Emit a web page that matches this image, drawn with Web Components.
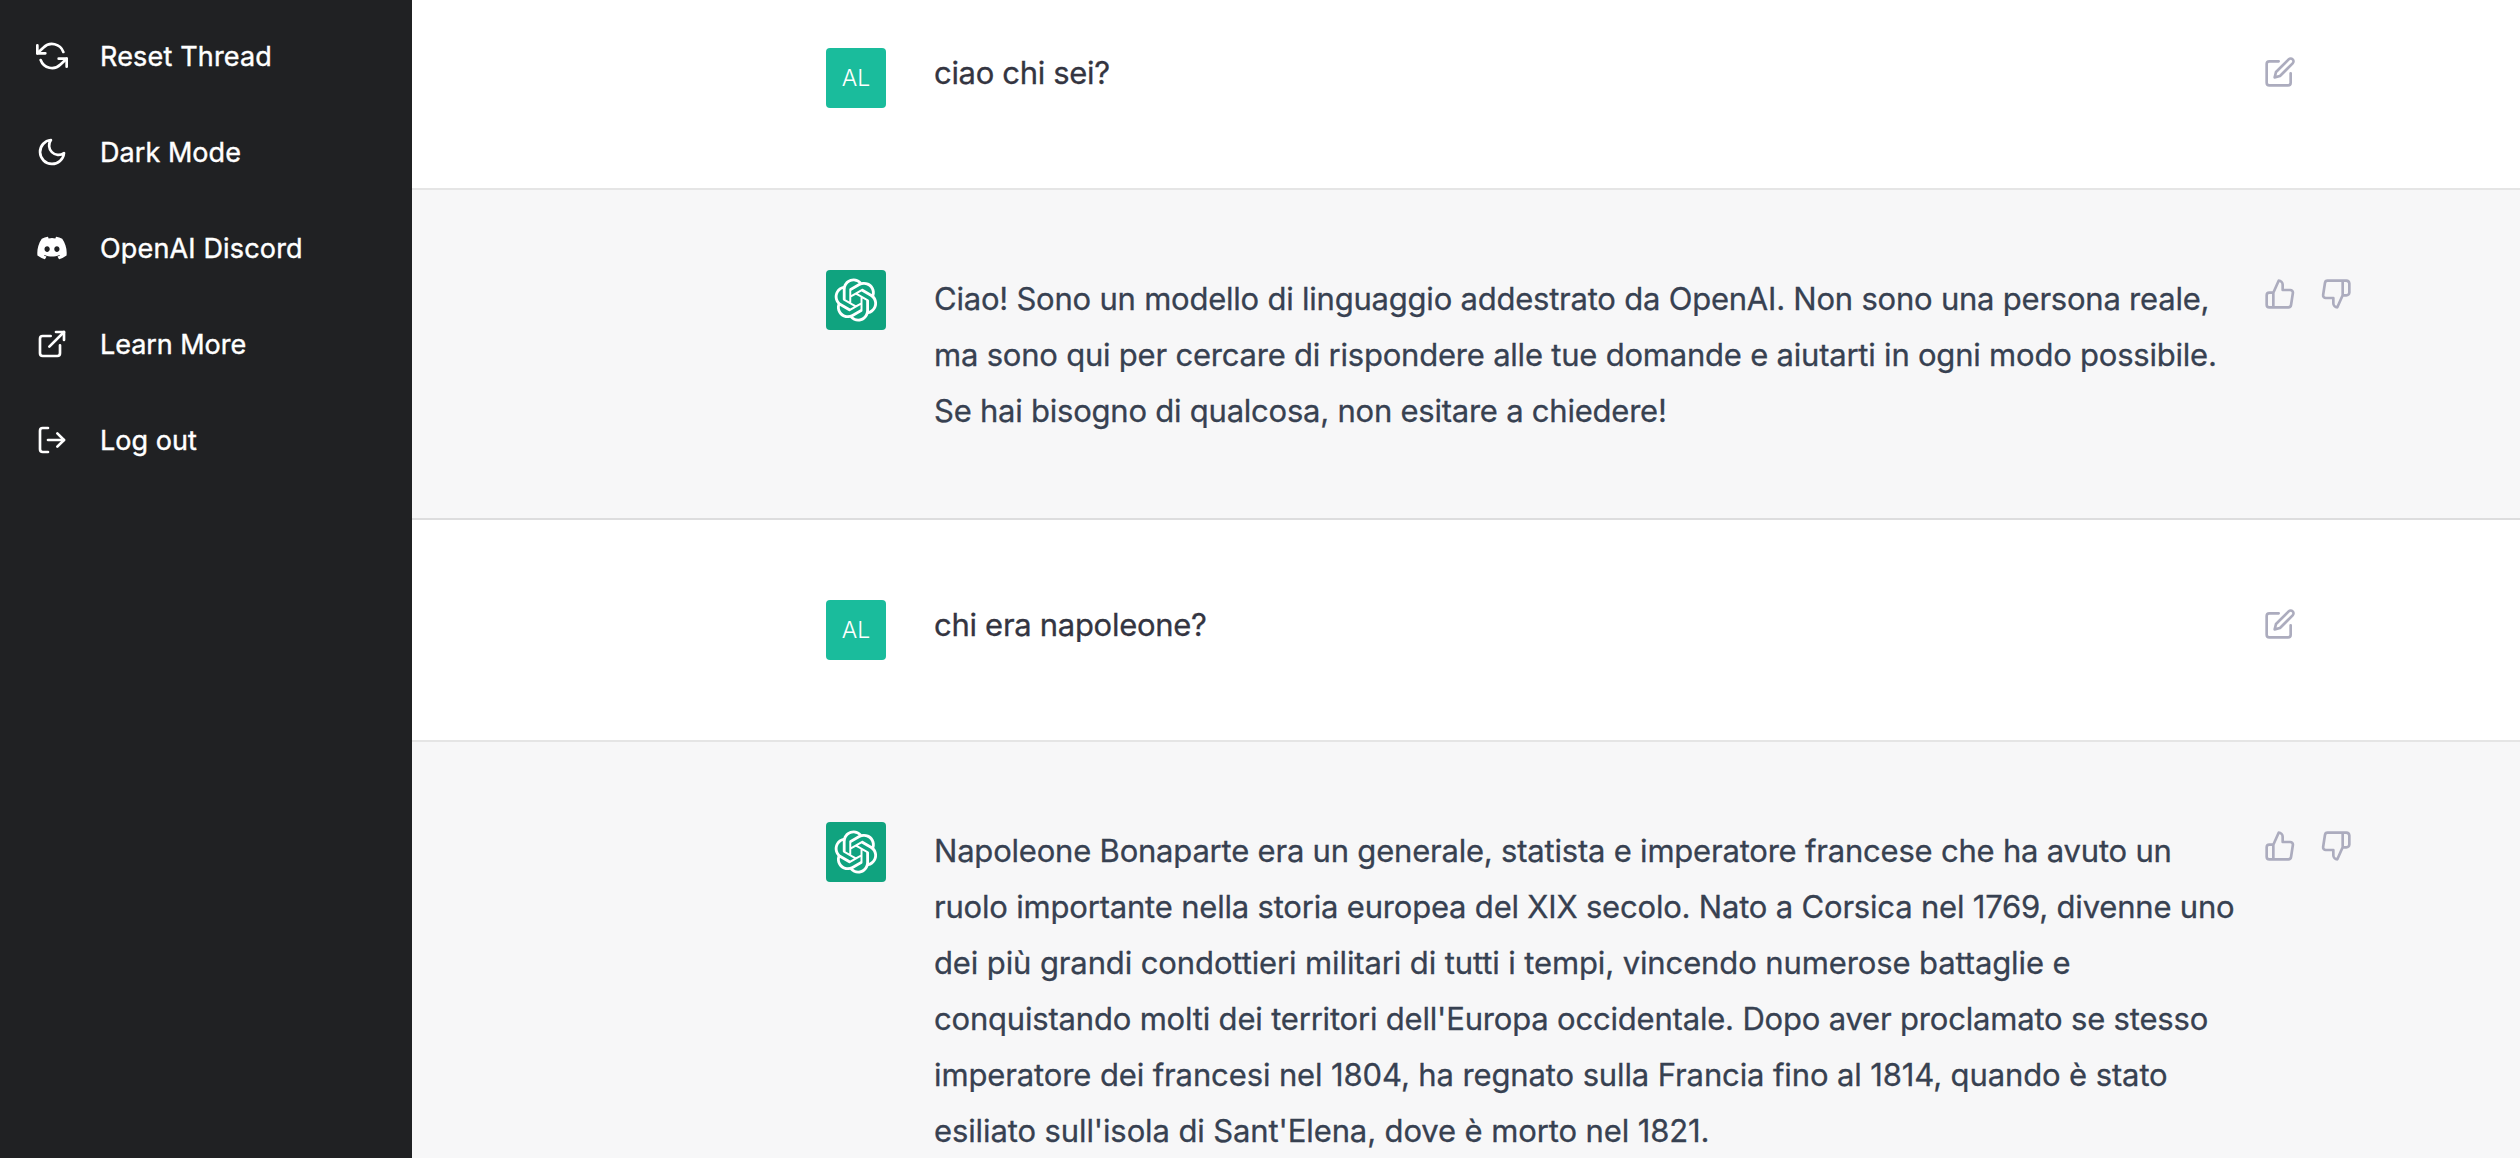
<!DOCTYPE html>
<html lang="it">
<head>
<meta charset="utf-8">
<title>Chat</title>
<style>
    body {
        margin: 0;
        height: 100vh;
        overflow: hidden;
        font-family: Inter, "Liberation Sans", sans-serif;
    }
</style>
</head>
<body>
<chat-app>
    <side-nav slot="nav">
        <side-link icon="refresh" track="0.17">Reset Thread</side-link>
        <side-link icon="moon" track="0.05">Dark Mode</side-link>
        <side-link icon="discord" track="0.16">OpenAI Discord</side-link>
        <side-link icon="external" track="-0.05">Learn More</side-link>
        <side-link icon="logout" track="0.039">Log out</side-link>
    </side-nav>
    <chat-message from="user" initials="AL">
        <text-line track="-0.32">ciao chi sei?</text-line>
    </chat-message>
    <chat-message from="assistant">
        <text-line track="-0.222">Ciao! Sono un modello di linguaggio addestrato da OpenAI. Non sono una persona reale,</text-line>
        <text-line track="-0.214">ma sono qui per cercare di rispondere alle tue domande e aiutarti in ogni modo possibile.</text-line>
        <text-line track="-0.23">Se hai bisogno di qualcosa, non esitare a chiedere!</text-line>
    </chat-message>
    <chat-message from="user" initials="AL">
        <text-line track="-0.293">chi era napoleone?</text-line>
    </chat-message>
    <chat-message from="assistant">
        <text-line track="-0.206">Napoleone Bonaparte era un generale, statista e imperatore francese che ha avuto un</text-line>
        <text-line track="-0.193">ruolo importante nella storia europea del XIX secolo. Nato a Corsica nel 1769, divenne uno</text-line>
        <text-line track="-0.113">dei più grandi condottieri militari di tutti i tempi, vincendo numerose battaglie e</text-line>
        <text-line track="-0.188">conquistando molti dei territori dell'Europa occidentale. Dopo aver proclamato se stesso</text-line>
        <text-line track="-0.116">imperatore dei francesi nel 1804, ha regnato sulla Francia fino al 1814, quando è stato</text-line>
        <text-line track="-0.11">esiliato sull'isola di Sant'Elena, dove è morto nel 1821.</text-line>
    </chat-message>
</chat-app>

<script>
const icons = {
    refresh: '<polyline points="1 4 1 10 7 10"/><polyline points="23 20 23 14 17 14"/><path d="M20.49 9A9 9 0 0 0 5.64 5.64L1 10m22 4l-4.64 4.36A9 9 0 0 1 3.51 15"/>',
    moon: '<path d="M21 12.79A9 9 0 1 1 11.21 3 7 7 0 0 0 21 12.79z"/>',
    external: '<path d="M18 13v6a2 2 0 0 1-2 2H5a2 2 0 0 1-2-2V8a2 2 0 0 1 2-2h6"/><polyline points="15 3 21 3 21 9"/><line x1="10" y1="14" x2="21" y2="3"/>',
    logout: '<path d="M9 21H5a2 2 0 0 1-2-2V5a2 2 0 0 1 2-2h4"/><polyline points="16 17 21 12 16 7"/><line x1="21" y1="12" x2="9" y2="12"/>',
    edit: '<path d="M11 4H4a2 2 0 0 0-2 2v14a2 2 0 0 0 2 2h14a2 2 0 0 0 2-2v-7"/><path d="M18.5 2.5a2.121 2.121 0 0 1 3 3L12 15l-4 1 1-4 9.5-9.5z"/>',
    up: '<path d="M14 9V5a3 3 0 0 0-3-3l-4 9v11h11.28a2 2 0 0 0 2-1.7l1.38-9a2 2 0 0 0-2-2.3zM7 22H4a2 2 0 0 1-2-2v-7a2 2 0 0 1 2-2h3"/>',
    down: '<path d="M10 15v4a3 3 0 0 0 3 3l4-9V2H5.72a2 2 0 0 0-2 1.7l-1.38 9a2 2 0 0 0 2 2.3zm7-13h2.67A2.31 2.31 0 0 1 22 4v7a2.31 2.31 0 0 1-2.33 2H17"/>'
};

// filled shapes bring their own viewBox
const filled = {
    discord: {
        box: '0 0 640 512',
        d: 'M524.531,69.836a1.5,1.5,0,0,0-.764-.7A485.065,485.065,0,0,0,404.081,32.03a1.816,1.816,0,0,0-1.923.91,337.461,337.461,0,0,0-14.9,30.6,447.848,447.848,0,0,0-134.426,0,309.541,309.541,0,0,0-15.135-30.6,1.89,1.89,0,0,0-1.924-.91A483.689,483.689,0,0,0,116.085,69.137a1.712,1.712,0,0,0-.788.676C39.068,183.651,18.186,294.69,28.43,404.354a2.016,2.016,0,0,0,.765,1.375A487.666,487.666,0,0,0,176.02,479.918a1.9,1.9,0,0,0,2.063-.676A348.2,348.2,0,0,0,208.12,430.4a1.86,1.86,0,0,0-1.019-2.588,321.173,321.173,0,0,1-45.868-21.853,1.885,1.885,0,0,1-.185-3.126c3.082-2.309,6.166-4.711,9.109-7.137a1.819,1.819,0,0,1,1.9-.256c96.229,43.917,200.41,43.917,295.5,0a1.812,1.812,0,0,1,1.924.233c2.944,2.426,6.027,4.851,9.132,7.16a1.884,1.884,0,0,1-.162,3.126,301.407,301.407,0,0,1-45.89,21.83,1.875,1.875,0,0,0-1,2.611,391.055,391.055,0,0,0,30.014,48.815,1.864,1.864,0,0,0,2.063.7A486.048,486.048,0,0,0,610.7,405.729a1.882,1.882,0,0,0,.765-1.352C623.729,277.594,590.933,167.465,524.531,69.836ZM222.491,337.58c-28.972,0-52.844-26.587-52.844-59.239S193.056,219.1,222.491,219.1c29.665,0,53.306,26.82,52.843,59.239C275.334,310.993,251.924,337.58,222.491,337.58Zm195.38,0c-28.971,0-52.843-26.587-52.843-59.239S388.437,219.1,417.871,219.1c29.667,0,53.307,26.82,52.844,59.239C470.715,310.993,447.538,337.58,417.871,337.58Z'
    },
    openai: {
        box: '0 0 41 41',
        d: 'M37.532 16.8707C37.9808 15.5241 38.1363 14.0974 37.9886 12.6859C37.8409 11.2744 37.3934 9.91076 36.676 8.68622C35.6126 6.83404 33.9882 5.3676 32.0373 4.4985C30.0864 3.62941 27.9098 3.40259 25.8215 3.85078C24.8796 2.7893 23.7219 1.94125 22.4257 1.36341C21.1295 0.785575 19.7249 0.491269 18.3058 0.500197C16.1708 0.495044 14.0893 1.16803 12.3614 2.42214C10.6335 3.67624 9.34853 5.44666 8.6917 7.47815C7.30085 7.76286 5.98686 8.3414 4.8377 9.17505C3.68854 10.0087 2.73073 11.0782 2.02839 12.312C0.956464 14.1591 0.498905 16.2988 0.721698 18.4228C0.944492 20.5467 1.83612 22.5449 3.268 24.1293C2.81966 25.4759 2.66413 26.9026 2.81182 28.3141C2.95951 29.7256 3.40701 31.0892 4.12437 32.3138C5.18791 34.1659 6.8123 35.6322 8.76321 36.5013C10.7141 37.3704 12.8907 37.5973 14.9789 37.1492C15.9208 38.2107 17.0786 39.0587 18.3747 39.6366C19.6709 40.2144 21.0755 40.5087 22.4946 40.4998C24.6307 40.5054 26.7133 39.8321 28.4418 38.5772C30.1704 37.3223 31.4556 35.5506 32.1119 33.5179C33.5027 33.2332 34.8167 32.6547 35.9659 31.821C37.115 30.9874 38.0728 29.9178 38.7752 28.684C39.8458 26.8371 40.3023 24.6979 40.0789 22.5748C39.8556 20.4517 38.9639 18.4544 37.532 16.8707ZM22.4978 37.8849C20.7443 37.8874 19.0459 37.2733 17.6994 36.1501C17.7601 36.117 17.8666 36.0586 17.936 36.0161L25.9004 31.4156C26.1003 31.3019 26.2663 31.137 26.3813 30.9378C26.4964 30.7386 26.5563 30.5124 26.5549 30.2825V19.0542L29.9213 20.998C29.9389 21.0068 29.9541 21.0198 29.9656 21.0359C29.977 21.052 29.9842 21.0707 29.9867 21.0902V30.3889C29.9842 32.375 29.1946 34.2791 27.7909 35.6841C26.3872 37.0892 24.4838 37.8806 22.4978 37.8849ZM6.39227 31.0064C5.51397 29.4888 5.19742 27.7107 5.49804 25.9832C5.55718 26.0187 5.66048 26.0818 5.73461 26.1244L13.699 30.7248C13.8975 30.8408 14.1233 30.902 14.3532 30.902C14.583 30.902 14.8088 30.8408 15.0073 30.7248L24.731 25.1103V28.9979C24.7321 29.0177 24.7283 29.0376 24.7199 29.0556C24.7115 29.0736 24.6988 29.0893 24.6829 29.1012L16.6317 33.7497C14.9096 34.7416 12.8643 35.0097 10.9447 34.4954C9.02506 33.9811 7.38785 32.7263 6.39227 31.0064ZM4.29707 13.6194C5.17156 12.0998 6.55279 10.9364 8.19885 10.3327C8.19885 10.4013 8.19491 10.5228 8.19491 10.6071V19.808C8.19351 20.0378 8.25334 20.2638 8.36823 20.4629C8.48312 20.6619 8.64893 20.8267 8.84863 20.9404L18.5723 26.5542L15.206 28.4979C15.1894 28.5089 15.1703 28.5155 15.1505 28.5173C15.1307 28.5191 15.1107 28.516 15.0924 28.5082L7.04046 23.8557C5.32135 22.8601 4.06716 21.2235 3.55289 19.3046C3.03862 17.3858 3.30624 15.3413 4.29707 13.6194ZM31.955 20.0556L22.2312 14.4411L25.5976 12.4981C25.6142 12.4872 25.6333 12.4805 25.6531 12.4787C25.6729 12.4769 25.6928 12.4801 25.7111 12.4879L33.7631 17.1364C34.9967 17.849 36.0017 18.8982 36.6606 20.1613C37.3194 21.4244 37.6047 22.849 37.4832 24.2684C37.3617 25.6878 36.8382 27.0432 35.9743 28.1759C35.1103 29.3086 33.9415 30.1717 32.6047 30.6641C32.6047 30.5947 32.6047 30.4733 32.6047 30.3889V21.188C32.6066 20.9586 32.5474 20.7328 32.4332 20.5338C32.319 20.3348 32.154 20.1698 31.955 20.0556ZM35.3055 15.0128C35.2464 14.9765 35.1431 14.9142 35.069 14.8717L27.1045 10.2712C26.906 10.1554 26.6803 10.0943 26.4504 10.0943C26.2206 10.0943 25.9948 10.1554 25.7963 10.2712L16.0726 15.8858V11.9982C16.0715 11.9783 16.0753 11.9585 16.0837 11.9405C16.0921 11.9225 16.1048 11.9068 16.1207 11.8949L24.1719 7.25025C25.4053 6.53903 26.8158 6.19376 28.2383 6.25482C29.6608 6.31589 31.0364 6.78077 32.2044 7.59508C33.3723 8.40939 34.2842 9.53945 34.8334 10.8531C35.3826 12.1667 35.5464 13.6095 35.3055 15.0128ZM14.2424 21.9419L10.8752 19.9981C10.8576 19.9893 10.8423 19.9763 10.8309 19.9602C10.8195 19.9441 10.8122 19.9254 10.8098 19.9058V10.6071C10.8107 9.18295 11.2173 7.78848 11.9819 6.58696C12.7466 5.38544 13.8377 4.42659 15.1275 3.82264C16.4173 3.21869 17.8524 2.99464 19.2649 3.1767C20.6775 3.35876 22.0089 3.93941 23.1034 4.85067C23.0427 4.88379 22.937 4.94215 22.8668 4.98473L14.9024 9.58517C14.7025 9.69878 14.5366 9.86356 14.4215 10.0626C14.3065 10.2616 14.2466 10.4877 14.2479 10.7175L14.2424 21.9419ZM16.071 17.9991L20.4018 15.4978L24.7325 17.9975V22.9985L20.4018 25.4983L16.071 22.9985V17.9991Z'
    }
};

class UiIcon extends HTMLElement {
    constructor() {
        super();
        this.attachShadow({mode: "open"});
    }

    connectedCallback() {
        const name = this.getAttribute('name');
        const shape = filled[name];
        const svg = shape
            ? `<svg viewBox="${shape.box}" fill="currentColor"><path d="${shape.d}"/></svg>`
            : `<svg viewBox="0 0 24 24" fill="none" stroke="currentColor" stroke-width="2" stroke-linecap="round" stroke-linejoin="round">${icons[name]}</svg>`;
        this.shadowRoot.innerHTML = `
        <style>
            :host {
                display: block;
                flex: none;
                width: var(--icon-size, 32px);
                height: var(--icon-size, 32px);
            }
            svg {
                display: block;
                width: 100%;
                height: 100%;
            }
        </style>
        ${svg}
        `;
    }
}

class SideLink extends HTMLElement {
    constructor() {
        super();
        this.attachShadow({mode: "open"});
    }

    connectedCallback() {
        this.shadowRoot.innerHTML = `
        <style>
            :host {
                display: flex;
                align-items: center;
                gap: 32px;
                height: 96px;
                padding: 0 36px;
                color: #fff;
                font-size: 27px;
                white-space: nowrap;
                cursor: pointer;
            }
            span {
                letter-spacing: ${this.getAttribute('track') || 0}px;
                -webkit-text-stroke: .4px currentColor;
            }
        </style>
        <ui-icon name="${this.getAttribute('icon')}"></ui-icon>
        <span><slot></slot></span>
        `;
    }
}

class SideNav extends HTMLElement {
    constructor() {
        super();
        this.attachShadow({mode: "open"}).innerHTML = `
        <style>
            :host {
                display: block;
                height: 100%;
                box-sizing: border-box;
                padding-top: 8px;
                background: #202123;
            }
            nav {
                display: flex;
                flex-direction: column;
            }
        </style>
        <nav><slot></slot></nav>
        `;
    }
}

class TextLine extends HTMLElement {
    constructor() {
        super();
        this.attachShadow({mode: "open"});
    }

    connectedCallback() {
        this.shadowRoot.innerHTML = `
        <style>
            :host {
                display: block;
                white-space: nowrap;
                letter-spacing: ${this.getAttribute('track') || 0}px;
                -webkit-text-stroke: .3px currentColor;
            }
        </style>
        <slot></slot>
        `;
    }
}

class ChatMessage extends HTMLElement {
    constructor() {
        super();
        this.attachShadow({mode: "open"});
    }

    connectedCallback() {
        const user = this.getAttribute('from') === 'user';
        const avatar = user ? this.getAttribute('initials') : '<ui-icon name="openai"></ui-icon>';
        const actions = (user ? ['edit'] : ['up', 'down'])
            .map(name => `<button><ui-icon name="${name}"></ui-icon></button>`)
            .join('');
        this.shadowRoot.innerHTML = `
        <style>
            :host {
                display: flex;
                align-items: flex-start;
                padding: 80px 0 80px 414px;
                border-bottom: 2px solid rgba(0, 0, 0, .1);
                font-size: 31px;
                line-height: 48px;
                color: #343541;
                background: #fff;
            }
            :host([from=assistant]) {
                line-height: 56px;
                color: #374151;
                background: #f7f7f8;
            }
            .avatar {
                display: flex;
                flex: none;
                align-items: center;
                justify-content: center;
                width: 60px;
                height: 60px;
                margin-right: 48px;
                border-radius: 4px;
                font-size: 23px;
                font-weight: 300;
                line-height: 1;
                color: #fff;
                background: #1abc9c;
            }
            :host([from=assistant]) .avatar {
                --icon-size: 44px;
                background: #10a37f;
            }
            .text {
                flex: none;
                width: 1322px;
                margin: 1px 0 -1px;
            }
            .actions {
                display: flex;
                gap: 8px;
            }
            button {
                padding: 8px;
                border: 0;
                background: none;
                color: #acacbe;
                cursor: pointer;
            }
        </style>
        <div class="avatar">${avatar}</div>
        <div class="text"><slot></slot></div>
        <div class="actions">${actions}</div>
        `;
    }
}

class ChatApp extends HTMLElement {
    constructor() {
        super();
        this.attachShadow({mode: "open"}).innerHTML = `
        <style>
            :host {
                display: grid;
                grid-template-columns: 412px 1fr;
                height: 100vh;
                overflow: hidden;
            }
            aside {
                height: 100vh;
            }
            main {
                height: 100vh;
                overflow: hidden;
                background: #fff;
            }
            /* the thread is scrolled a little past its top */
            .thread {
                margin-top: -32px;
            }
        </style>
        <aside><slot name="nav"></slot></aside>
        <main><div class="thread"><slot></slot></div></main>
        `;
    }
}

customElements.define('ui-icon', UiIcon);
customElements.define('side-link', SideLink);
customElements.define('side-nav', SideNav);
customElements.define('text-line', TextLine);
customElements.define('chat-message', ChatMessage);
customElements.define('chat-app', ChatApp);
</script>
</body>
</html>
